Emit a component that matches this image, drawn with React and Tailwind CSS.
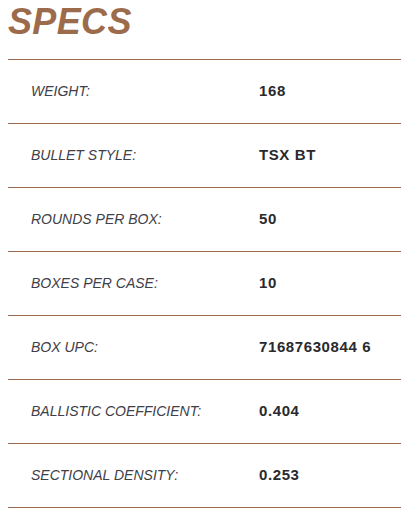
const SPECS = [
  { label: 'WEIGHT:', value: '168' },
  { label: 'BULLET STYLE:', value: 'TSX BT' },
  { label: 'ROUNDS PER BOX:', value: '50' },
  { label: 'BOXES PER CASE:', value: '10' },
  { label: 'BOX UPC:', value: '71687630844 6' },
  { label: 'BALLISTIC COEFFICIENT:', value: '0.404' },
  { label: 'SECTIONAL DENSITY:', value: '0.253' },
];

export default function App() {
  return (
    <div className="w-[401px] h-[519px] bg-white" style={{ fontFamily: "'Liberation Sans', Arial, sans-serif" }}>
      {/* Heading */}
      <div className="h-[59px] pl-[8px] pt-[4px]">
        <h2 className="text-[36px] leading-none font-bold italic text-[#9c6b4c] tracking-[0.01em]">SPECS</h2>
      </div>

      {/* Spec rows */}
      <div className="ml-2 border-t border-[#9b6a50]">
        {SPECS.map((s) => (
          <div key={s.label} className="h-16 flex items-center border-b border-[#9b6a50]">
            <div className="w-[251px] pl-[23px] text-[14px] italic text-[#404048]">{s.label}</div>
            <div className="text-[15px] font-bold text-[#2a2a2e] tracking-[0.04em]">{s.value}</div>
          </div>
        ))}
      </div>
    </div>
  );
}
